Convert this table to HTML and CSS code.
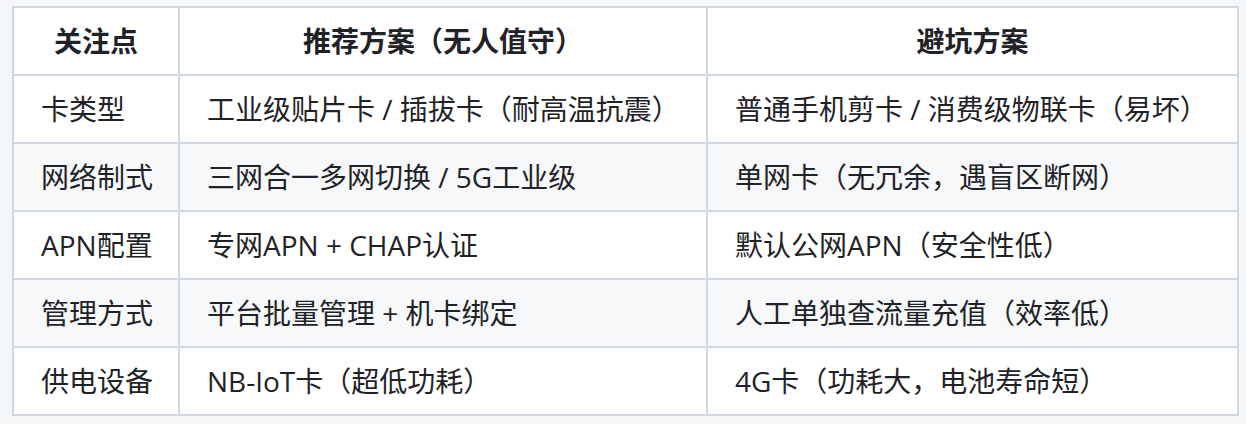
FILE: index.html
```html
<!DOCTYPE html>
<html lang="zh-CN">
<head>
<meta charset="utf-8">
<link rel="stylesheet" href="styles.css">
</head>
<body>
<table class="cmp">
  <colgroup>
    <col class="c1"><col class="c2"><col class="c3">
  </colgroup>
  <thead>
    <tr><th>关注点</th><th>推荐方案（无人值守）</th><th>避坑方案</th></tr>
  </thead>
  <tbody>
    <tr><td>卡类型</td><td>工业级贴片卡 / 插拔卡（耐高温抗震）</td><td>普通手机剪卡 / 消费级物联卡（易坏）</td></tr>
    <tr class="alt"><td>网络制式</td><td>三网合一多网切换 / 5G工业级</td><td>单网卡（无冗余，遇盲区断网）</td></tr>
    <tr><td>APN配置</td><td>专网APN + CHAP认证</td><td>默认公网APN（安全性低）</td></tr>
    <tr class="alt"><td>管理方式</td><td>平台批量管理 + 机卡绑定</td><td>人工单独查流量充值（效率低）</td></tr>
    <tr><td>供电设备</td><td>NB-IoT卡（超低功耗）</td><td>4G卡（功耗大，电池寿命短）</td></tr>
  </tbody>
</table>
</body>
</html>
```
FILE: styles.css
```css
html, body {
  background: #f5f6f8;
}
body {
  margin: 0;
  padding: 6px 9px 0 12px;
  font-family: "Open Sans", "Noto Sans CJK SC", sans-serif;
  color: #1f2328;
}
.cmp {
  border-collapse: collapse;
  table-layout: fixed;
  width: 1225px;
  font-size: 28px;
  line-height: 40px;
}
.c1 { width: 166px; }
.c2 { width: 528px; }
.c3 { width: 531px; }
.cmp th, .cmp td {
  border: 2px solid #d1d8e0;
  padding: 13px 27px;
  height: 40px;
  white-space: nowrap;
}
.cmp th {
  font-weight: 700;
  text-align: center;
  background: #ffffff;
}
.cmp td {
  text-align: left;
  font-weight: 400;
  background: #ffffff;
}
.cmp tr.alt td {
  background: #f6f8fa;
}
.sp { word-spacing: 3px; }
```
